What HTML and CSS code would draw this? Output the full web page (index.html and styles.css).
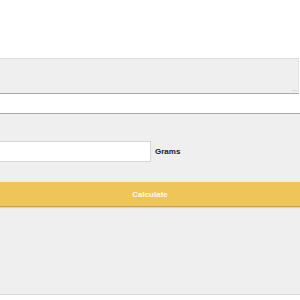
FILE: index.html
```html
<!DOCTYPE html>
<html>
<head>
<meta charset="utf-8">
<link rel="stylesheet" href="styles.css">
</head>
<body>
<div class="page">
  <div class="notes"><span class="grip"></span></div>
  <div class="spacer"></div>
  <div class="calc">
    <div class="row">
      <div class="field"></div>
      <span class="unit">Grams</span>
    </div>
    <div class="btn">Calculate</div>
  </div>
</div>
</body>
</html>
```
FILE: styles.css
```css
html, body { margin: 0; padding: 0; background: #fff; }
body { font-family: "Liberation Sans", Arial, sans-serif; }
.page { width: 300px; height: 300px; padding-top: 58px; box-sizing: border-box; }
.notes {
  position: relative;
  height: 34px;
  margin-right: 1px;
  background: #efefef;
  border-top: 1px solid #dcdcdc;
  border-right: 1px solid #e2e2e2;
  border-bottom: 1px solid #a9a9a9;
}
.grip { position: absolute; right: 1px; bottom: 2px; width: 5px; height: 1px; background: #d8d8d8; }
.spacer { height: 19px; }
.calc {
  background: #efefef;
  border-top: 1px solid #aaaaaa;
  border-bottom: 1px solid #dcdcdc;
  padding-top: 27px;
  box-sizing: border-box;
  height: 182px;
}
.row { display: flex; align-items: center; gap: 4px; height: 21px; }
.field {
  width: 152px; height: 21px; box-sizing: border-box;
  margin-left: -1px;
  background: #fff; border: 1px solid #d6d6d6;
}
.unit { font-size: 8px; font-weight: bold; color: #222; }
.btn {
  margin-top: 20px;
  height: 24px;
  background: #efc458;
  border-bottom: 1px solid #c9a24a;
  box-shadow: 0 1px 1px rgba(0,0,0,0.12);
  color: #fffbea;
  font-size: 8px;
  font-weight: bold;
  display: flex; align-items: center; justify-content: center;
}
```
